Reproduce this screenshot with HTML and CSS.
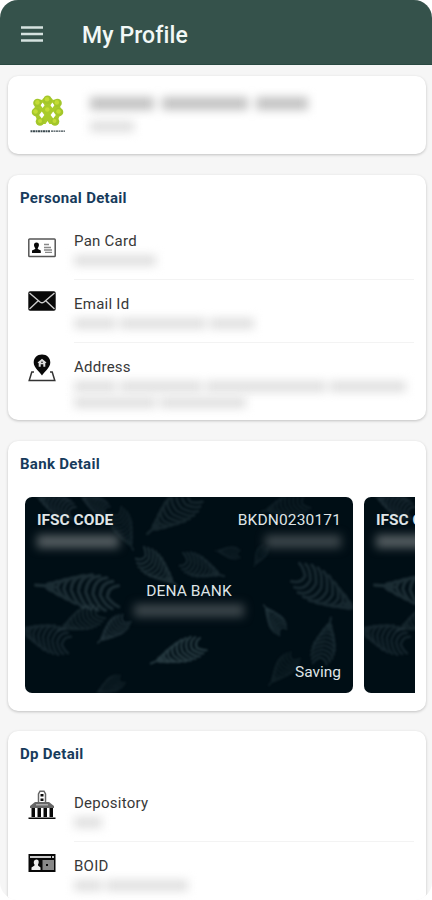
FILE: index.html
```html
<!DOCTYPE html>
<html lang="en">
<head>
<meta charset="utf-8">
<title>My Profile</title>
<link rel="stylesheet" href="styles.css">
</head>
<body>
<svg class="defs" aria-hidden="true">
  <defs>
    <path id="frond" d="M-6 0Q4-1 14-1M4-1Q6-5 11-5M9-1Q11-8 18-8M15-2Q16-11 25-12M21-2Q22-14 32-15M28-2Q28-16 39-18M35-2Q35-17 46-20M42-2Q42-17 53-20M49-1Q49-16 60-19M56-1Q56-13 66-16M63 0Q63-9 72-12M4 0Q7 4 11 4M9 0Q13 7 19 8M15 0Q20 10 27 11M21 0Q27 13 34 14M28 0Q35 15 42 17M35 0Q42 16 49 18M42 0Q49 16 56 18M49 1Q56 15 63 17M56 1Q62 12 69 14M63 2Q69 9 75 11"/>
  </defs>
  <symbol id="ferns" viewBox="0 0 328 196">
    <g fill="none" stroke="#40565e" stroke-width="3.400" stroke-linecap="round">
      <use href="#frond" transform="translate(17 89) rotate(8) scale(1.050 .9)" opacity=".42"/>
      <use href="#frond" transform="translate(12 0) rotate(24) scale(.55)" opacity=".4"/>
      <use href="#frond" transform="translate(56 0) rotate(28) scale(.42)" opacity=".4"/>
      <use href="#frond" transform="translate(126 34) rotate(-38) scale(.78)" opacity=".32"/>
      <use href="#frond" transform="translate(149 86) rotate(222) scale(.62)" opacity=".45"/>
      <use href="#frond" transform="translate(196 78) rotate(202) scale(.58)" opacity=".36"/>
      <use href="#frond" transform="translate(107 50) rotate(247) scale(.55)" opacity=".28"/>
      <use href="#frond" transform="translate(192 54) rotate(8) scale(.32)" opacity=".28"/>
      <use href="#frond" transform="translate(36 132) rotate(-22) scale(.6)" opacity=".32"/>
      <use href="#frond" transform="translate(75 144) rotate(-40) scale(.48)" opacity=".48"/>
      <use href="#frond" transform="translate(-6 132) rotate(18) scale(.72)" opacity=".33"/>
      <use href="#frond" transform="translate(130 165) rotate(-20) scale(.7 .6)" opacity=".6"/>
      <use href="#frond" transform="translate(240 14) rotate(-12) scale(.6)" opacity=".22"/>
      <use href="#frond" transform="translate(330 112) rotate(212) scale(.95 .85)" opacity=".36"/>
      <use href="#frond" transform="translate(240 110) rotate(55) scale(.42)" opacity=".52"/>
      <use href="#frond" transform="translate(305 124) rotate(104) scale(.6)" opacity=".38"/>
      <use href="#frond" transform="translate(246 186) rotate(-48) scale(.5)" opacity=".24"/>
      <use href="#frond" transform="translate(230 68) rotate(-60) scale(.3)" opacity=".25"/>
      <use href="#frond" transform="translate(72 196) rotate(-28) scale(.4)" opacity=".28"/>
    </g>
  </symbol>
</svg>

<div class="screen">
  <header class="bar">
    <svg class="menu" viewBox="0 0 22 16"><path d="M0 1.5h22M0 8h22M0 14.5h22"/></svg>
    <h1>My Profile</h1>
  </header>

  <main>
    <section class="card user">
      <svg class="logo" viewBox="0 0 36 40">
        <path fill="#a9cb2b" d="M17.500 2 29 6l2.500 11-5.500 12H9L3.500 17 6 6z"/>
        <g fill="#a3c62a">
          <circle cx="17.500" cy="4.800" r="4.300"/><circle cx="7.500" cy="8" r="4.300"/><circle cx="27.500" cy="8" r="4.300"/>
          <circle cx="6" cy="17" r="4.300"/><circle cx="29" cy="17" r="4.300"/>
          <circle cx="10" cy="26.500" r="4.300"/><circle cx="25" cy="26.500" r="4.300"/>
        </g>
        <g fill="#c3dc35">
          <circle cx="17" cy="4.300" r="2.300"/><circle cx="7.400" cy="7.400" r="2.300"/><circle cx="26.800" cy="7.400" r="2.300"/>
          <circle cx="5.500" cy="16.500" r="2.300"/><circle cx="28.500" cy="16.500" r="2.300"/><circle cx="17.300" cy="14.500" r="2.300"/>
          <circle cx="10" cy="26" r="2"/><circle cx="24.500" cy="26" r="2"/>
        </g>
        <path fill="#fff" d="m12.600 7.500 2 2.800-2 2.800-2-2.800zM22.400 7.500l2 2.800-2 2.800-2-2.800zM11.800 16.500l2.600 3.500-2.600 3.500L9.200 20zM23.200 16.500l2.600 3.500-2.600 3.500-2.600-3.500zM17.500 26l3 4.500h-6zM12 1.500l1 2.500-1.500 1-2-1.500zM23 1.500 22 4l1.500 1 2-1.500z"/>
        <path class="wordmark" d="M.5 36.200h20"/><path class="wordmark thin" d="M21 36.200h14"/>
      </svg>
      <div class="lines">
        <div class="redact strong"><i class="w64"></i><i class="w86"></i><i class="w52"></i></div>
        <div class="redact"><i class="w44"></i></div>
      </div>
    </section>

    <section class="card personal">
      <h2>Personal Detail</h2>
      <div class="row">
        <svg class="icon pan" viewBox="0 0 28 20">
          <rect x=".8" y="1" width="26.400" height="17.500" rx=".8" fill="#fff" stroke="#555" stroke-width="1.500"/>
          <path d="M8.500 4.500c3 0 3 3.500 1.300 5.500v1l3 1.500V15H4v-2.500L7.200 11v-1C5.500 8 5.500 4.500 8.500 4.500z"/>
          <path d="M16 6.500h5M16 9.500h7M16 12h8M17 14.300h7" stroke="#888" stroke-width="1.300"/>
        </svg>
        <div class="text"><span>Pan Card</span><div class="redact"><i class="w82"></i></div></div>
      </div>
      <div class="row">
        <svg class="icon mail" viewBox="0 0 28 20">
          <rect x=".3" y=".3" width="27.400" height="19.400" rx="1.800"/>
          <path d="M1.500 2 12 11q2 1.500 4 0L26.500 2M1.500 18l9-8.500M26.500 18l-9-8.500" fill="none" stroke="#ccc" stroke-width="1.400"/>
        </svg>
        <div class="text"><span>Email Id</span><div class="redact"><i class="w42"></i><i class="w86"></i><i class="w44"></i></div></div>
      </div>
      <div class="row last">
        <svg class="icon pin" viewBox="0 0 28 28">
          <path d="M6 18H3.800L1.200 26.500h25.600L24.200 18H22" fill="none" stroke="#333" stroke-width="1.500"/>
          <path d="M14 .5c5 0 8.300 3.500 8.300 8C22.300 14 16 18 14 21.500 12 18 5.700 14 5.700 8.500c0-4.500 3.300-8 8.300-8z"/>
          <path d="m9.500 8.600 4.500-3.800 4.500 3.800-1.200.6v3.500h-2v-2.500h-2.600v2.500h-2V9.200z" fill="#ddd"/>
          <circle cx="14" cy="8.200" r=".8"/>
        </svg>
        <div class="text"><span>Address</span>
          <div class="redact"><i class="w42"></i><i class="w82"></i><i class="w120"></i><i class="w76"></i></div>
          <div class="redact"><i class="w82"></i><i class="w86"></i></div>
        </div>
      </div>
    </section>

    <section class="card bank">
      <h2>Bank Detail</h2>
      <div class="carousel">
        <article class="account">
          <svg class="pattern" viewBox="0 0 328 196"><use href="#ferns" width="328" height="196"/></svg>
          <div class="codes"><b>IFSC CODE</b><span>BKDN0230171</span></div>
          <div class="codes values"><div class="redact"><i class="w82"></i></div><div class="redact dim"><i class="w76"></i></div></div>
          <div class="name">DENA BANK</div>
          <div class="redact number"><i class="w110"></i></div>
          <div class="type">Saving</div>
        </article>
        <article class="account">
          <svg class="pattern" viewBox="0 0 328 196"><use href="#ferns" width="328" height="196"/></svg>
          <div class="codes"><b>IFSC CODE</b></div>
          <div class="codes values"><div class="redact"><i class="w82"></i></div></div>
        </article>
      </div>
    </section>

    <section class="card dp">
      <h2>Dp Detail</h2>
      <div class="row">
        <svg class="icon depot" viewBox="0 0 28 30">
          <path d="M10.500 12V4l1.500-2.800h4L17.500 4v8" fill="#fff" stroke="#666" stroke-width="1.500"/>
          <path d="M12.500 4h3v2.500h-3zM12.500 8.500h3V11h-3z"/>
          <path d="m2 16 5-4h14l5 4v2H2z" fill="#666"/><path d="M8 14h12v1.500H8z" fill="#aaa"/>
          <path d="M3.500 18H7v9H3.500zM9.500 18H13v9H9.500zM15.500 18H19v9h-3.500zM21.500 18H25v9h-3.500zM.5 27.500h27V29H.5z"/>
        </svg>
        <div class="text"><span>Depository</span><div class="redact"><i class="w28"></i></div></div>
      </div>
      <div class="row last">
        <svg class="icon boid" viewBox="0 0 28 20">
          <path d="M.5 1h27v18H.5z"/><path d="M2 3h21v2H2zM24 3h2v2h-2z" fill="#ccc"/>
          <path d="M8.500 6.500c2.500 0 2.800 3 1.500 5v1l2.500 2V17H3.500v-2.500l3-2v-1c-1.500-2-.5-5 2-5z" fill="#eee"/>
          <path d="M14.500 7H26v10H14.500z" fill="#888"/><path d="M18 11h2v2h-2z"/>
        </svg>
        <div class="text"><span>BOID</span><div class="redact"><i class="w28"></i><i class="w82"></i></div></div>
      </div>
    </section>
  </main>
</div>
</body>
</html>
```
FILE: styles.css
```css
* { box-sizing: border-box; }
body { margin: 0; background: #fff; font-family: Roboto, sans-serif; color: #383838; }
h1, h2 { margin: 0; }
.defs { position: absolute; width: 0; height: 0; }
.screen { height: 900px; overflow: hidden; border-radius: 18px; background: #f6f6f6; }

.bar { height: 65px; display: flex; align-items: center; padding: 4px 21px 0; gap: 39px; background: #35524b; border-bottom: 1px solid #294941; }
.menu { width: 22px; height: 16px; stroke: #d5e2df; stroke-width: 2.600; }
h1 { padding-top: 3px; font-size: 23px; line-height: 30px; font-weight: 500; letter-spacing: .1px; color: #f2f8f6; }

main { display: flex; flex-direction: column; gap: 21px; padding: 11px 6px 0 8px; }
.card { background: #fff; border-radius: 10px; box-shadow: 0 1px 3px rgba(0,0,0,.22); }
.user { height: 78px; display: flex; padding: 18px 22px; gap: 24px; }
.logo { width: 36px; height: 40px; margin-top: 1px; filter: blur(.3px); }
.wordmark { stroke: #3d4b50; stroke-width: 2; stroke-dasharray: 2 .5; }
.thin { stroke-width: 1.200; }
.lines { display: flex; flex-direction: column; gap: 11px; padding: 3px 0; }

.personal { height: 245px; }
.bank { height: 270px; }
.dp { height: 190px; margin-top: -1px; }
h2 { padding: 13px 12px 0; height: 42px; font-size: 15px; line-height: 21px; font-weight: 700; letter-spacing: .3px; color: #173b5c; }
.dp h2 { height: 48px; }

.row { height: 63px; display: flex; padding: 0 12px 0 20px; gap: 18px; }
.text { flex: 1; min-width: 0; padding-top: 14px; border-bottom: 1px solid #f3f3f3; font-size: 15px; line-height: 20px; letter-spacing: .25px; }
.text .redact { margin-top: 4px; }
.last { height: 78px; }
.last .text { border-bottom: 0; }
.icon { width: 28px; height: 20px; flex: none; fill: #080808; }
.pan { margin-top: 21px; }
.mail { margin-top: 11px; }
.pin { height: 28px; margin-top: 11px; }
.depot { height: 30px; margin-top: 11px; }
.boid { margin-top: 11px; }

.redact { display: flex; gap: 4px; height: 11px; filter: blur(5px); }
.redact i { background: #dfdfdf; flex: none; }
.strong { height: 13px; gap: 8px; }
.strong i { background: #c2c2c2; }
.text .redact + .redact { margin-top: 5px; }
.w28 { width: 28px; } .w42 { width: 42px; } .w44 { width: 44px; }
.w52 { width: 52px; } .w64 { width: 64px; } .w76 { width: 76px; }
.w82 { width: 82px; } .w86 { width: 86px; } .w110 { width: 110px; } .w120 { width: 120px; }

.carousel { display: flex; gap: 11px; margin: 14px 11px 0 17px; overflow: hidden; }
.account { position: relative; flex: none; width: 328px; height: 196px; padding: 13px 12px; border-radius: 7px; overflow: hidden; background: #000e15; color: #dfe4e6; font-size: 15.500px; line-height: 20px; display: flex; flex-direction: column; }
.pattern { position: absolute; inset: 0; width: 328px; height: 196px; filter: blur(.9px); }
.codes, .name, .type { position: relative; }
.codes { display: flex; justify-content: space-between; }
.codes span { letter-spacing: .15px; }
.values { margin-top: 5px; }
.account .redact { height: 13px; }
.account .redact i { background: #555e62; }
.account .dim i { background: #3c464b; }
.name { margin-top: 33px; text-align: center; letter-spacing: .1px; }
.account .number { justify-content: center; margin-top: 3px; }
.account .number i { background: #3c464b; }
.type { margin-top: auto; text-align: right; margin-bottom: -2px; }
```
